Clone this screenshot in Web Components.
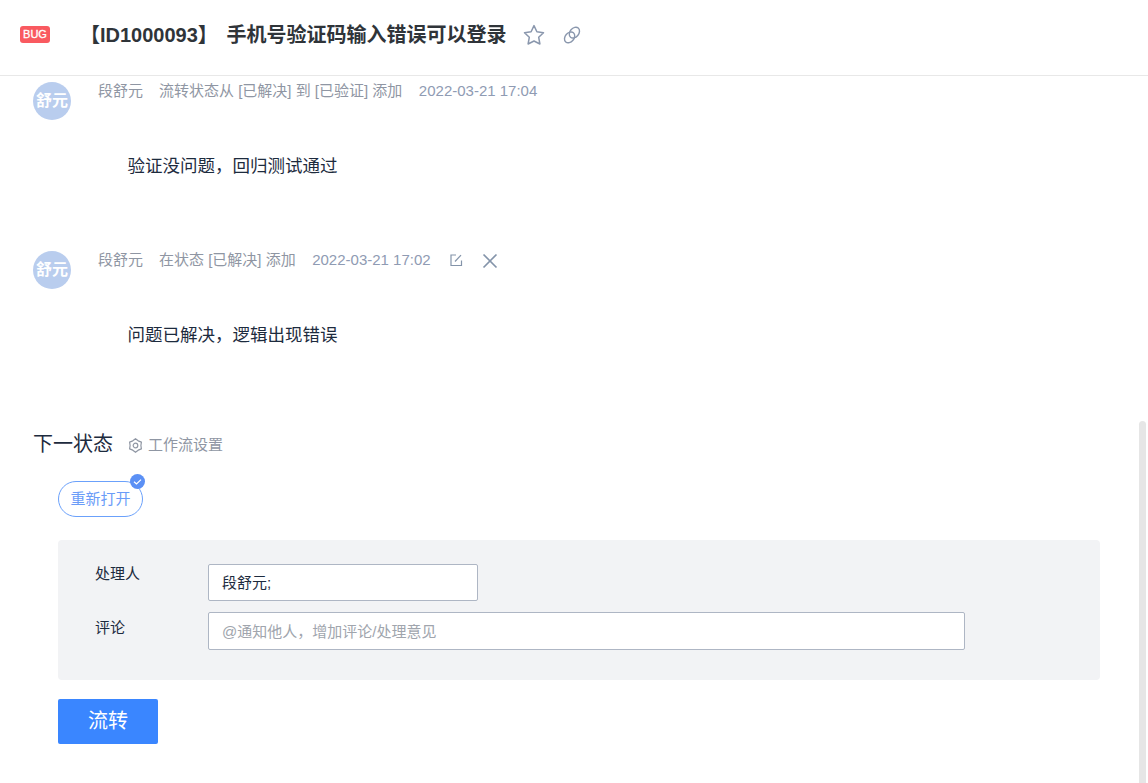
<!DOCTYPE html>
<html lang="zh">
<head>
<meta charset="utf-8">
<title>ID1000093</title>
<style>
  html, body { margin: 0; height: 100%; overflow: hidden; background: #fff; }
  body { font-family: "Liberation Sans", "Noto Sans CJK SC", sans-serif; color: #1d2b3e; }
  #page { position: relative; height: 783px; overflow: hidden; }
</style>
</head>
<body>
<div id="page">
  <issue-header></issue-header>
  <issue-comment time="2022-03-21 17:04" action="流转状态从 [已解决] 到 [已验证] 添加" text="验证没问题，回归测试通过"></issue-comment>
  <issue-comment time="2022-03-21 17:02" action="在状态 [已解决] 添加" text="问题已解决，逻辑出现错误" editable></issue-comment>
  <next-state></next-state>
  <page-scrollbar></page-scrollbar>
</div>

<script>
class IssueHeader extends HTMLElement {
  connectedCallback() {
    this.attachShadow({ mode: "open" });
    this.shadowRoot.innerHTML = `
      <style>
        :host {
          display: flex;
          align-items: center;
          border-bottom: 1px solid #e8e8e8;
          padding: 0 0 6px 20px;
          height: 69px;
        }
        .bug {
          width: 30px;
          height: 17px;
          line-height: 17px;
          background: #f95a60;
          color: #fff;
          font-size: 11px;
          -webkit-text-stroke: 0.3px #fff;
          text-align: center;
          border-radius: 3px;
          margin-right: 30px;
        }
        h1 {
          margin: 0;
          font-size: 20px;
          line-height: 28px;
          font-weight: 700;
          color: #2f3439;
          white-space: pre;
          word-spacing: 3px;
        }
        svg { display: block; fill: none; stroke: #8a97ad; }
        .star { margin-left: 17px; }
        .link { margin-left: 18px; }
      </style>
      <div class="bug">BUG</div>
      <h1>【ID1000093】 手机号验证码输入错误可以登录</h1>
      <svg class="star" width="22" height="22" viewBox="0 0 22 22" stroke-width="1.5" stroke-linejoin="round">
        <path d="M11 1.6l2.9 6.2 6.6.9-4.8 4.6 1.2 6.7L11 17l-5.9 3 1.2-6.7-4.8-4.6 6.6-.9z"/>
      </svg>
      <svg class="link" width="18" height="18" viewBox="0 0 18 18" stroke-width="1.4">
        <ellipse cx="11.4" cy="6.6" rx="4.4" ry="6" transform="rotate(40 11.4 6.6)"/>
        <ellipse cx="6.6" cy="11.4" rx="4.4" ry="6" transform="rotate(40 6.6 11.4)"/>
      </svg>
    `;
  }
}

class IssueComment extends HTMLElement {
  connectedCallback() {
    const editable = this.hasAttribute("editable");
    this.attachShadow({ mode: "open" });
    this.shadowRoot.innerHTML = `
      <style>
        :host {
          display: block;
          height: 169px;
          padding: 6px 0 0 33px;
          box-sizing: border-box;
        }
        .top { display: flex; align-items: flex-start; }
        .avatar {
          width: 38px;
          height: 38px;
          border-radius: 50%;
          background: #b9cdee;
          color: #fff;
          font-size: 16px;
          font-weight: 700;
          line-height: 38px;
          text-align: center;
          margin-right: 27px;
          flex: none;
          white-space: nowrap;
        }
        .meta {
          display: flex;
          align-items: center;
          height: 18px;
          font-size: 15px;
          line-height: 18px;
          color: #8f96a3;
          white-space: pre;
        }
        .action { margin-left: 16px; }
        .time { margin-left: 16.5px; color: #8f9bb3; }
        svg { display: block; fill: none; stroke: #8494aa; }
        .edit { margin-left: 18px; }
        .del { margin: 2px 0 0 19px; }
        .text {
          margin: 34px 0 0 94.5px;
          font-size: 17.5px;
          line-height: 24px;
          color: #1d2b3e;
        }
      </style>
      <div class="top">
        <div class="avatar">舒元</div>
        <div class="meta">
          <span>段舒元</span><span class="action">${this.getAttribute("action")}</span><span class="time">${this.getAttribute("time")}</span>
          ${editable ? `
          <svg class="edit" width="14" height="14" viewBox="0 0 14 14" stroke-width="1.2">
            <path d="M7 2H2v10.5h10.5V7.5"/><path d="M6 8.5L12 2.2"/>
          </svg>
          <svg class="del" width="16" height="16" viewBox="0 0 16 16" stroke-width="1.7">
            <path d="M1.5 1.5l13 13M14.5 1.5l-13 13"/>
          </svg>` : ""}
        </div>
      </div>
      <div class="text">${this.getAttribute("text")}</div>
    `;
  }
}

class NextState extends HTMLElement {
  connectedCallback() {
    this.attachShadow({ mode: "open" });
    this.shadowRoot.innerHTML = `
      <style>
        :host { display: block; padding: 17px 0 0 33px; }
        .title { display: flex; align-items: center; height: 26px; }
        h2 { margin: 0; font-size: 20px; line-height: 26px; font-weight: 400; color: #1d2b3e; }
        .gear { display: block; margin: 2px 0 0 15px; fill: none; stroke: #8f96a3; }
        .wf { margin: 2px 0 0 5px; font-size: 15px; color: #8f96a3; line-height: 20px; }
        .body { margin-left: 25px; width: 1042px; }
        .pill {
          position: relative;
          display: inline-block;
          box-sizing: border-box;
          width: 85px;
          height: 36px;
          margin-top: 24px;
          border: 1px solid #6ba1fb;
          border-radius: 18px;
          color: #6a9cf8;
          font-size: 15px;
          line-height: 34px;
          text-align: center;
          vertical-align: top;
        }
        .check {
          position: absolute;
          top: -8px;
          right: -3px;
          display: block;
        }
        .panel {
          box-sizing: border-box;
          height: 140px;
          margin-top: 23px;
          padding: 24px 0 0 37px;
          background: #f2f3f5;
          border-radius: 4px;
        }
        .row { display: flex; }
        .row + .row { margin-top: 11px; }
        .row + .row .label { margin-top: 6px; }
        .label { width: 113px; font-size: 15px; line-height: 20px; flex: none; color: #1d2b3e; }
        .input {
          box-sizing: border-box;
          background: #fff;
          border: 1px solid #aeb6c4;
          border-radius: 2px;
          padding: 0 0 2px 13px;
          font-size: 15px;
          color: #1d2b3e;
          display: flex;
          align-items: center;
        }
        .who { width: 270px; height: 37px; }
        .say { width: 757px; height: 38px; color: #a0a5ad; }
        button {
          display: block;
          width: 100px;
          height: 45px;
          margin-top: 19px;
          padding: 0 0 5px;
          border: 0;
          border-radius: 2px;
          background: #3a86ff;
          color: #fff;
          font: inherit;
          font-size: 20px;
        }
      </style>
      <div class="title">
        <h2>下一状态</h2>
        <svg class="gear" width="15" height="15" viewBox="0 0 15 15" stroke-width="1.2" stroke-linejoin="round">
          <path d="M7.5 .7L10.2 2.82 13.39 4.1 12.9 7.5 13.39 10.9 10.2 12.18 7.5 14.3 4.8 12.18 1.61 10.9 2.1 7.5 1.61 4.1 4.8 2.82z"/><circle cx="7.5" cy="7.5" r="2.3"/>
        </svg>
        <span class="wf">工作流设置</span>
      </div>
      <div class="body">
        <div class="pill">重新打开
          <svg class="check" width="15" height="15" viewBox="0 0 15 15">
            <circle cx="7.5" cy="7.5" r="7.5" fill="#5b90f5"/>
            <path d="M4 7.7l2.5 2.2L11 5.6" fill="none" stroke="#fff" stroke-width="1.3"/>
          </svg>
        </div>
        <div class="panel">
          <div class="row"><span class="label">处理人</span><div class="input who">段舒元;</div></div>
          <div class="row"><span class="label">评论</span><div class="input say">@通知他人，增加评论/处理意见</div></div>
        </div>
        <button>流转</button>
      </div>
    `;
  }
}

class PageScrollbar extends HTMLElement {
  connectedCallback() {
    this.attachShadow({ mode: "open" });
    this.shadowRoot.innerHTML = `
      <style>
        :host {
          position: absolute;
          left: 1139px;
          top: 421px;
          width: 7px;
          height: 362px;
          background: #e6e6e6;
          border-radius: 4px 4px 0 0;
        }
      </style>
    `;
  }
}

customElements.define("issue-header", IssueHeader);
customElements.define("issue-comment", IssueComment);
customElements.define("next-state", NextState);
customElements.define("page-scrollbar", PageScrollbar);
</script>
</body>
</html>
